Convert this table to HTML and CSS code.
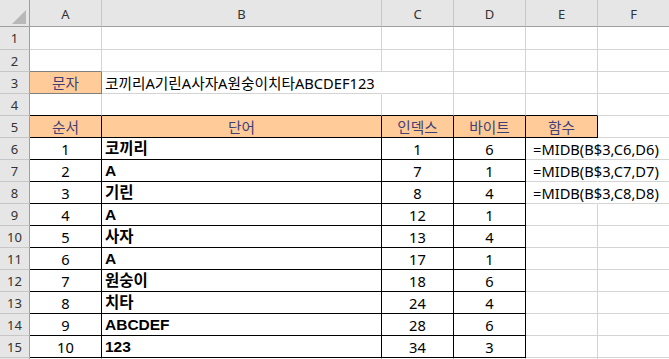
FILE: index.html
```html
<!DOCTYPE html>
<html lang="ko">
<head>
<meta charset="utf-8">
<title>MIDB</title>
<link rel="stylesheet" href="styles.css">
</head>
<body>
<div class="sheet">
  <div class="c corner"><svg class="tri" width="14" height="14" viewBox="0 0 14 14"><polygon points="14,0 14,14 0,14" fill="#b8b8b8"/></svg></div>
  <div class="c hc">A</div><div class="c hc">B</div><div class="c hc">C</div><div class="c hc">D</div><div class="c hc">E</div><div class="c hc">F</div>

  <div class="c rh">1</div><div class="c"></div><div class="c"></div><div class="c"></div><div class="c"></div><div class="c"></div><div class="c"></div>

  <div class="c rh">2</div><div class="c gb"></div><div class="c"></div><div class="c"></div><div class="c"></div><div class="c"></div><div class="c"></div>

  <div class="c rh">3</div><div class="c in ctr gr gb">문자</div><div class="c ov pl">코끼리A기린A사자A원숭이치타ABCDEF123</div><div class="c"></div><div class="c"></div><div class="c"></div><div class="c"></div>

  <div class="c rh">4</div><div class="c kb"></div><div class="c kb"></div><div class="c kb"></div><div class="c kb"></div><div class="c kb"></div><div class="c"></div>

  <div class="c rh">5</div><div class="c in ctr kr kb">순서</div><div class="c in ctr kr kb">단어</div><div class="c in ctr kr kb">인덱스</div><div class="c in ctr kr kb">바이트</div><div class="c in ctr kr kb">함수</div><div class="c"></div>

  <div class="c rh">6</div><div class="c ctr kr kb">1</div><div class="c b pl kr kb">코끼리</div><div class="c ctr kr kb">1</div><div class="c ctr kr kb">6</div><div class="c ov fx">=MIDB(B$3,C6,D6)</div><div class="c"></div>

  <div class="c rh">7</div><div class="c ctr kr kb">2</div><div class="c b pl kr kb">A</div><div class="c ctr kr kb">7</div><div class="c ctr kr kb">1</div><div class="c ov fx">=MIDB(B$3,C7,D7)</div><div class="c"></div>

  <div class="c rh">8</div><div class="c ctr kr kb">3</div><div class="c b pl kr kb">기린</div><div class="c ctr kr kb">8</div><div class="c ctr kr kb">4</div><div class="c ov fx">=MIDB(B$3,C8,D8)</div><div class="c"></div>

  <div class="c rh">9</div><div class="c ctr kr kb">4</div><div class="c b pl kr kb">A</div><div class="c ctr kr kb">12</div><div class="c ctr kr kb">1</div><div class="c"></div><div class="c"></div>

  <div class="c rh">10</div><div class="c ctr kr kb">5</div><div class="c b pl kr kb">사자</div><div class="c ctr kr kb">13</div><div class="c ctr kr kb">4</div><div class="c"></div><div class="c"></div>

  <div class="c rh">11</div><div class="c ctr kr kb">6</div><div class="c b pl kr kb">A</div><div class="c ctr kr kb">17</div><div class="c ctr kr kb">1</div><div class="c"></div><div class="c"></div>

  <div class="c rh">12</div><div class="c ctr kr kb">7</div><div class="c b pl kr kb">원숭이</div><div class="c ctr kr kb">18</div><div class="c ctr kr kb">6</div><div class="c"></div><div class="c"></div>

  <div class="c rh">13</div><div class="c ctr kr kb">8</div><div class="c b pl kr kb">치타</div><div class="c ctr kr kb">24</div><div class="c ctr kr kb">4</div><div class="c"></div><div class="c"></div>

  <div class="c rh">14</div><div class="c ctr kr kb">9</div><div class="c b pl kr kb">ABCDEF</div><div class="c ctr kr kb">28</div><div class="c ctr kr kb">6</div><div class="c"></div><div class="c"></div>

  <div class="c rh">15</div><div class="c ctr kr kb">10</div><div class="c b pl kr kb">123</div><div class="c ctr kr kb">34</div><div class="c ctr kr kb">3</div><div class="c"></div><div class="c"></div>

  <div class="c rh"></div><div class="c"></div><div class="c"></div><div class="c"></div><div class="c"></div><div class="c"></div><div class="c"></div>
</div>
</body>
</html>
```

FILE: styles.css
```css
html, body {
  margin: 0;
  padding: 0;
  background: #ffffff;
  overflow: hidden;
}

.sheet {
  display: grid;
  grid-template-columns: 30px 72px 280px 72px 72px 72px 72px;
  grid-template-rows: 27px 23px repeat(15, 22px);
  width: 690px;
  font-family: "Noto Sans", "Noto Sans CJK KR", sans-serif;
  font-size: 14.67px;
  color: #000;
}

.c {
  box-sizing: border-box;
  border-right: 1px solid #d4d4d4;
  border-bottom: 1px solid #d4d4d4;
  display: flex;
  align-items: center;
  line-height: 20px;
  white-space: nowrap;
  overflow: visible;
  min-width: 0;
}

.corner {
  background: #e6e6e6;
  border-right: 1px solid #9f9f9f;
  border-bottom: 1px solid #9f9f9f;
  justify-content: flex-end;
  align-items: flex-end;
  padding: 0 3px 2px 0;
}

.tri {
  display: block;
}

.hc {
  background: #e6e6e6;
  border-right: 1px solid #c6c6c6;
  border-bottom: 1px solid #9f9f9f;
  justify-content: center;
  font-size: 13px;
  color: #333;
  padding-top: 2px;
}

.rh {
  background: #e6e6e6;
  border-right: 1px solid #9f9f9f;
  border-bottom: 1px solid #c6c6c6;
  justify-content: center;
  font-size: 13px;
  color: #333;
}

.ctr {
  justify-content: center;
}

.pl {
  padding-left: 3px;
}

.fx {
  padding-left: 7px;
}

.in {
  background: #ffcc99;
  color: #3f3f76;
}

.gr {
  border-right-color: #7f7f7f;
}

.gb {
  border-bottom-color: #7f7f7f;
}

.kr {
  border-right-color: #000;
}

.kb {
  border-bottom-color: #000;
}

.ov {
  border-right-color: transparent;
}

.b {
  font-family: "Liberation Sans", "Noto Sans CJK KR", sans-serif;
  font-weight: 700;
  font-size: 15.5px;
}
```
